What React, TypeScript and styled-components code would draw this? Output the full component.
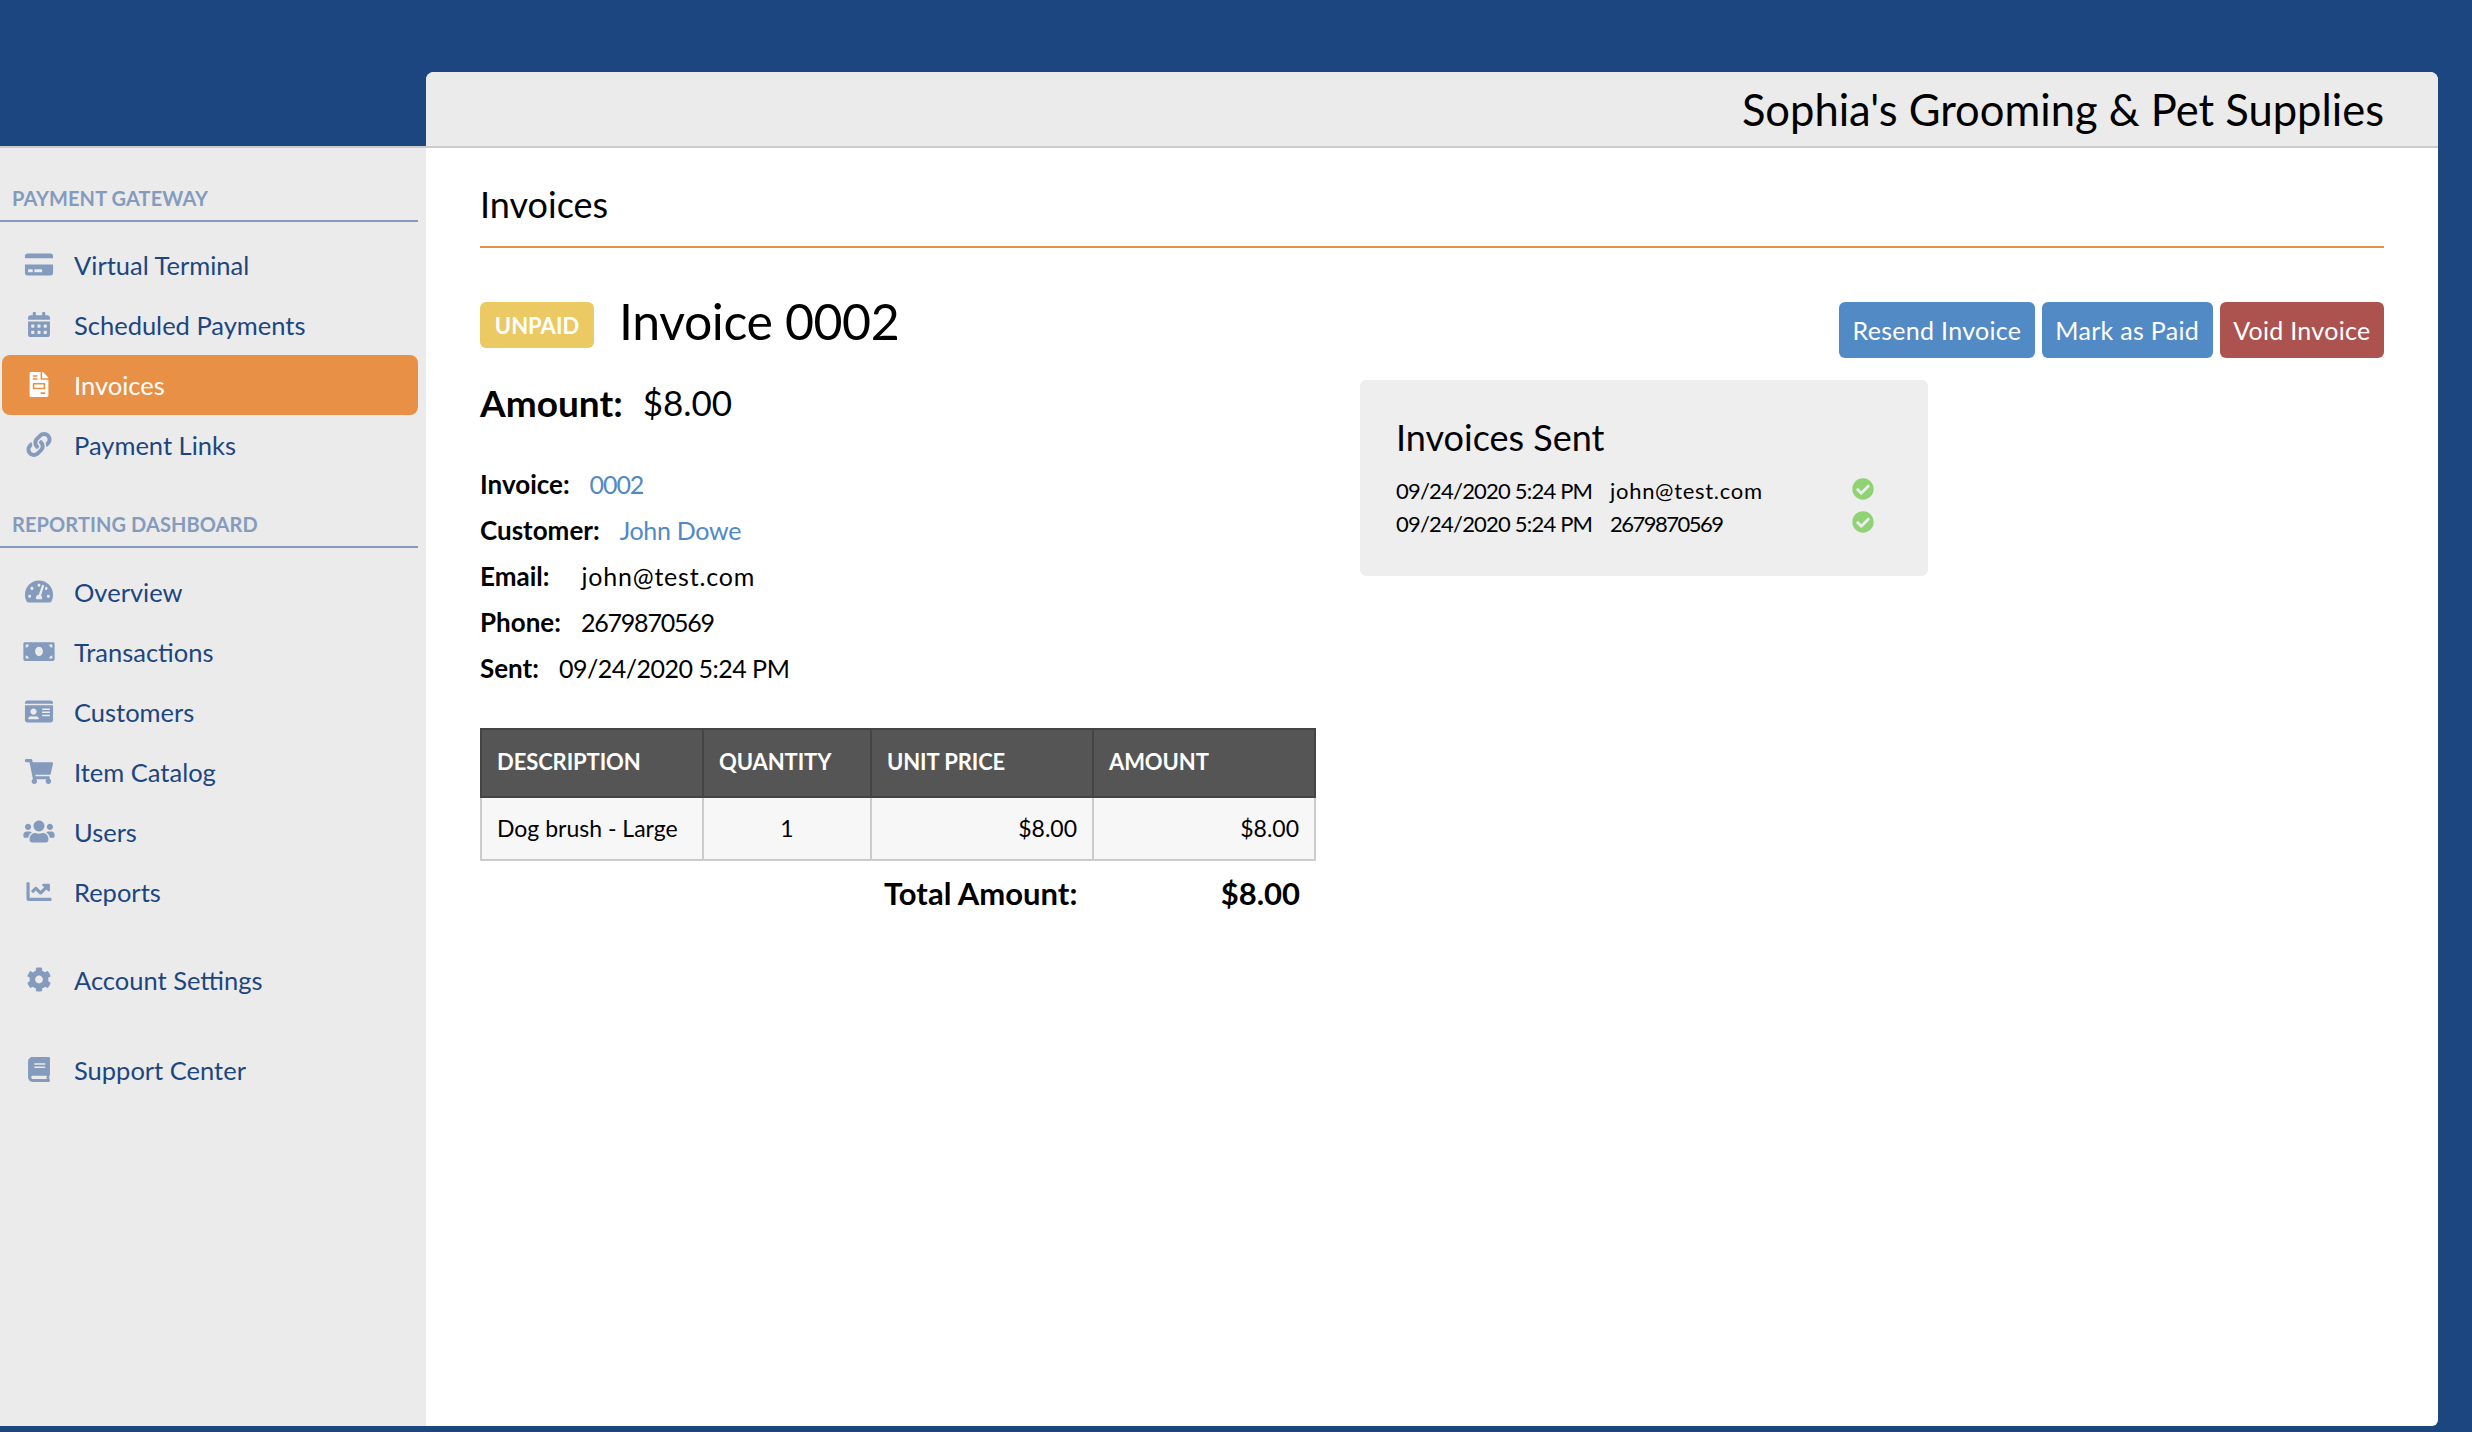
import styled, { createGlobalStyle } from 'styled-components'
import type { ReactNode } from 'react'
import {
  FaBook,
  FaCalendarAlt,
  FaChartLine,
  FaCheckCircle,
  FaCog,
  FaCreditCard,
  FaFileInvoice,
  FaIdCard,
  FaLink,
  FaMoneyBill,
  FaShoppingCart,
  FaTachometerAlt,
  FaUsers,
} from 'react-icons/fa'

const GlobalStyle = createGlobalStyle`
  html, body {
    margin: 0;
    padding: 0;
    background: #1c4680;
  }
  * {
    box-sizing: border-box;
  }
`

function NavItem(props: { icon: ReactNode; label: string; active?: boolean; gap?: number }) {
  return (
    <NavRow $active={props.active} $gap={props.gap}>
      <NavIcon $active={props.active}>{props.icon}</NavIcon>
      {props.label}
    </NavRow>
  )
}

export default function App() {
  return (
    <Page>
      <GlobalStyle />
      <Sidebar>
        <SectionTitle>PAYMENT GATEWAY</SectionTitle>
        <NavItem icon={<FaCreditCard />} label="Virtual Terminal" />
        <NavItem icon={<FaCalendarAlt />} label="Scheduled Payments" />
        <NavItem icon={<FaFileInvoice />} label="Invoices" active />
        <NavItem icon={<FaLink />} label="Payment Links" />
        <SectionTitle $second>REPORTING DASHBOARD</SectionTitle>
        <NavItem icon={<FaTachometerAlt />} label="Overview" />
        <NavItem icon={<FaMoneyBill />} label="Transactions" />
        <NavItem icon={<FaIdCard />} label="Customers" />
        <NavItem icon={<FaShoppingCart />} label="Item Catalog" />
        <NavItem icon={<FaUsers />} label="Users" />
        <NavItem icon={<FaChartLine />} label="Reports" />
        <NavItem icon={<FaCog />} label="Account Settings" gap={28} />
        <NavItem icon={<FaBook />} label="Support Center" gap={30} />
      </Sidebar>
      <Main>
        <MerchantBar>Sophia's Grooming &amp; Pet Supplies</MerchantBar>
        <Content>
          <PageTitle>Invoices</PageTitle>
          <InvoiceHead>
            <Badge>UNPAID</Badge>
            <InvoiceTitle>Invoice 0002</InvoiceTitle>
            <Actions>
              <ActionButton>Resend Invoice</ActionButton>
              <ActionButton>Mark as Paid</ActionButton>
              <ActionButton $danger>Void Invoice</ActionButton>
            </Actions>
          </InvoiceHead>
          <Columns>
            <Details>
              <AmountLine>
                <b>Amount:</b>
                <span>$8.00</span>
              </AmountLine>
              <InfoList>
                <InfoRow>
                  <b>Invoice:</b>
                  <LinkText $track={-1.1}>0002</LinkText>
                </InfoRow>
                <InfoRow>
                  <b>Customer:</b>
                  <LinkText $track={-0.3}>John Dowe</LinkText>
                </InfoRow>
                <InfoRow>
                  <b>Email:</b>
                  <InfoValue $track={0.8} $shift={12}>
                    john@test.com
                  </InfoValue>
                </InfoRow>
                <InfoRow>
                  <b>Phone:</b>
                  <InfoValue $track={-1.2}>2679870569</InfoValue>
                </InfoRow>
                <InfoRow>
                  <b>Sent:</b>
                  <InfoValue $track={-0.5}>09/24/2020 5:24 PM</InfoValue>
                </InfoRow>
              </InfoList>
              <ItemsTable>
                <thead>
                  <tr>
                    <HeadCell $w={222}>DESCRIPTION</HeadCell>
                    <HeadCell $w={168}>QUANTITY</HeadCell>
                    <HeadCell $w={222}>UNIT PRICE</HeadCell>
                    <HeadCell $w={222}>AMOUNT</HeadCell>
                  </tr>
                </thead>
                <tbody>
                  <tr>
                    <BodyCell>Dog brush - Large</BodyCell>
                    <BodyCell $align="center">1</BodyCell>
                    <BodyCell $align="right">$8.00</BodyCell>
                    <BodyCell $align="right">$8.00</BodyCell>
                  </tr>
                </tbody>
              </ItemsTable>
              <TotalRow>
                <span>Total Amount:</span>
                <span>$8.00</span>
              </TotalRow>
            </Details>
            <SentPanel>
              <SentTitle>Invoices Sent</SentTitle>
              <SentRow>
                <SentDate>09/24/2020 5:24 PM</SentDate>
                <SentTarget $track={0.7}>john@test.com</SentTarget>
                <SentCheck>
                  <FaCheckCircle />
                </SentCheck>
              </SentRow>
              <SentRow>
                <SentDate>09/24/2020 5:24 PM</SentDate>
                <SentTarget $track={-1.5}>2679870569</SentTarget>
                <SentCheck>
                  <FaCheckCircle />
                </SentCheck>
              </SentRow>
            </SentPanel>
          </Columns>
        </Content>
      </Main>
    </Page>
  )
}

const Page = styled.div`
  width: 2472px;
  height: 1432px;
  padding: 72px 34px 6px 0;
  display: grid;
  grid-template-columns: 426px 2012px;
  background: #1c4680;
  font-family: 'Lato', 'Noto Sans', sans-serif;
  color: #000;
  overflow: hidden;
`

const Sidebar = styled.nav`
  margin-top: 74px;
  padding: 37px 8px 0 0;
  background: #ebebeb;
  border-top: 2px solid #ccc;
`

const SectionTitle = styled.div<{ $second?: boolean }>`
  height: 37px;
  margin: ${(p) => (p.$second ? '36px 0 14px' : '0 0 13px')};
  padding-left: 12px;
  border-bottom: 2px solid #849bbd;
  color: #849bbd;
  font-size: 20px;
  font-weight: 700;
  letter-spacing: 0.1px;
  line-height: 26px;
`

const NavRow = styled.div<{ $active?: boolean; $gap?: number }>`
  height: 60px;
  margin-top: ${(p) => p.$gap ?? 0}px;
  margin-left: 2px;
  padding-bottom: 1px;
  display: flex;
  align-items: center;
  border-radius: 8px;
  background: ${(p) => (p.$active ? '#e89046' : 'transparent')};
  color: ${(p) => (p.$active ? '#fff' : '#1c4680')};
  font-size: 25.5px;
`

const NavIcon = styled.span<{ $active?: boolean }>`
  width: 40px;
  margin: 0 15px 0 17px;
  display: flex;
  justify-content: center;
  color: ${(p) => (p.$active ? '#fff' : '#849bbd')};
  & svg {
    width: 40px;
    height: 25px;
  }
`

const Main = styled.main`
  display: flex;
  flex-direction: column;
  background: #fff;
  border-radius: 8px 8px 6px 0;
  overflow: hidden;
`

const MerchantBar = styled.header`
  height: 76px;
  padding: 0 54px 0 0;
  display: flex;
  align-items: center;
  justify-content: flex-end;
  background: #ebebeb;
  border-bottom: 2px solid #ccc;
  font-size: 43.5px;
`

const Content = styled.div`
  padding: 32px 54px 0;
`

const PageTitle = styled.h1`
  height: 68px;
  margin: 0;
  border-bottom: 2px solid #e89046;
  font-size: 36px;
  font-weight: 400;
  line-height: 48px;
`

const InvoiceHead = styled.div`
  margin-top: 54px;
  height: 70px;
  display: flex;
  align-items: flex-start;
`

const Badge = styled.span`
  width: 114px;
  height: 46px;
  display: flex;
  align-items: center;
  justify-content: center;
  border-radius: 6px;
  background: #ebc963;
  color: #fff;
  font-size: 22px;
  font-weight: 700;
`

const InvoiceTitle = styled.h2`
  margin: 0 0 0 25px;
  font-size: 50px;
  font-weight: 400;
  letter-spacing: -0.4px;
  line-height: 38px;
`

const Actions = styled.div`
  margin-left: auto;
  display: flex;
  gap: 7px;
`

const ActionButton = styled.button<{ $danger?: boolean }>`
  height: 56px;
  padding: 0 13.5px;
  border: 0;
  border-radius: 6px;
  background: ${(p) => (p.$danger ? '#ad534f' : '#528ac6')};
  color: #fff;
  font-family: inherit;
  font-size: 25px;
  letter-spacing: 0.3px;
`

const Columns = styled.div`
  display: flex;
  gap: 45px;
  align-items: flex-start;
`

const Details = styled.div`
  width: 835px;
`

const AmountLine = styled.div`
  display: flex;
  gap: 20px;
  height: 60px;
  align-items: center;
  font-size: 35px;
  & b {
    font-size: 37px;
  }
`

const InfoList = styled.div`
  margin-top: 29px;
  display: flex;
  flex-direction: column;
`

const InfoRow = styled.div`
  height: 46px;
  display: flex;
  align-items: center;
  gap: 20px;
  font-size: 26px;
`

const InfoValue = styled.span<{ $track?: number; $shift?: number }>`
  margin-left: ${(p) => p.$shift ?? 0}px;
  font-size: 25px;
  letter-spacing: ${(p) => p.$track ?? 0}px;
`

const LinkText = styled(InfoValue)`
  color: #5189c6;
`

const ItemsTable = styled.table`
  width: 834px;
  margin-top: 37px;
  table-layout: fixed;
  border-collapse: collapse;
`

const HeadCell = styled.th<{ $w: number }>`
  width: ${(p) => p.$w}px;
  height: 68px;
  padding: 0 15px 3px;
  border: 2px solid #444;
  background: #555;
  color: #fff;
  font-size: 22px;
  font-weight: 700;
  letter-spacing: -0.1px;
  text-align: left;
`

const BodyCell = styled.td<{ $align?: string }>`
  height: 63px;
  padding: 0 15px 2px;
  border: 2px solid #ccc;
  background: #f7f7f7;
  font-size: 23px;
  text-align: ${(p) => p.$align ?? 'left'};
`

const TotalRow = styled.div`
  display: grid;
  grid-template-columns: 192px 224px;
  justify-content: end;
  padding: 14px 15px 0 0;
  font-size: 31px;
  font-weight: 700;
  line-height: 36px;
  white-space: nowrap;
  & > :last-child {
    text-align: right;
  }
`

const SentPanel = styled.aside`
  width: 568px;
  height: 196px;
  margin-top: 8px;
  padding: 34px 36px 0;
  border-radius: 6px;
  background: #eee;
`

const SentTitle = styled.h3`
  margin: 0 0 14px;
  font-size: 36px;
  font-weight: 400;
  line-height: 46px;
`

const SentRow = styled.div`
  height: 33px;
  display: flex;
  align-items: center;
  font-size: 22px;
`

const SentDate = styled.span`
  width: 214px;
  letter-spacing: -0.8px;
`

const SentTarget = styled.span<{ $track: number }>`
  width: 242px;
  letter-spacing: ${(p) => p.$track}px;
`

const SentCheck = styled.span`
  display: flex;
  margin-bottom: 4px;
  color: #8fd375;
  font-size: 22px;
`
